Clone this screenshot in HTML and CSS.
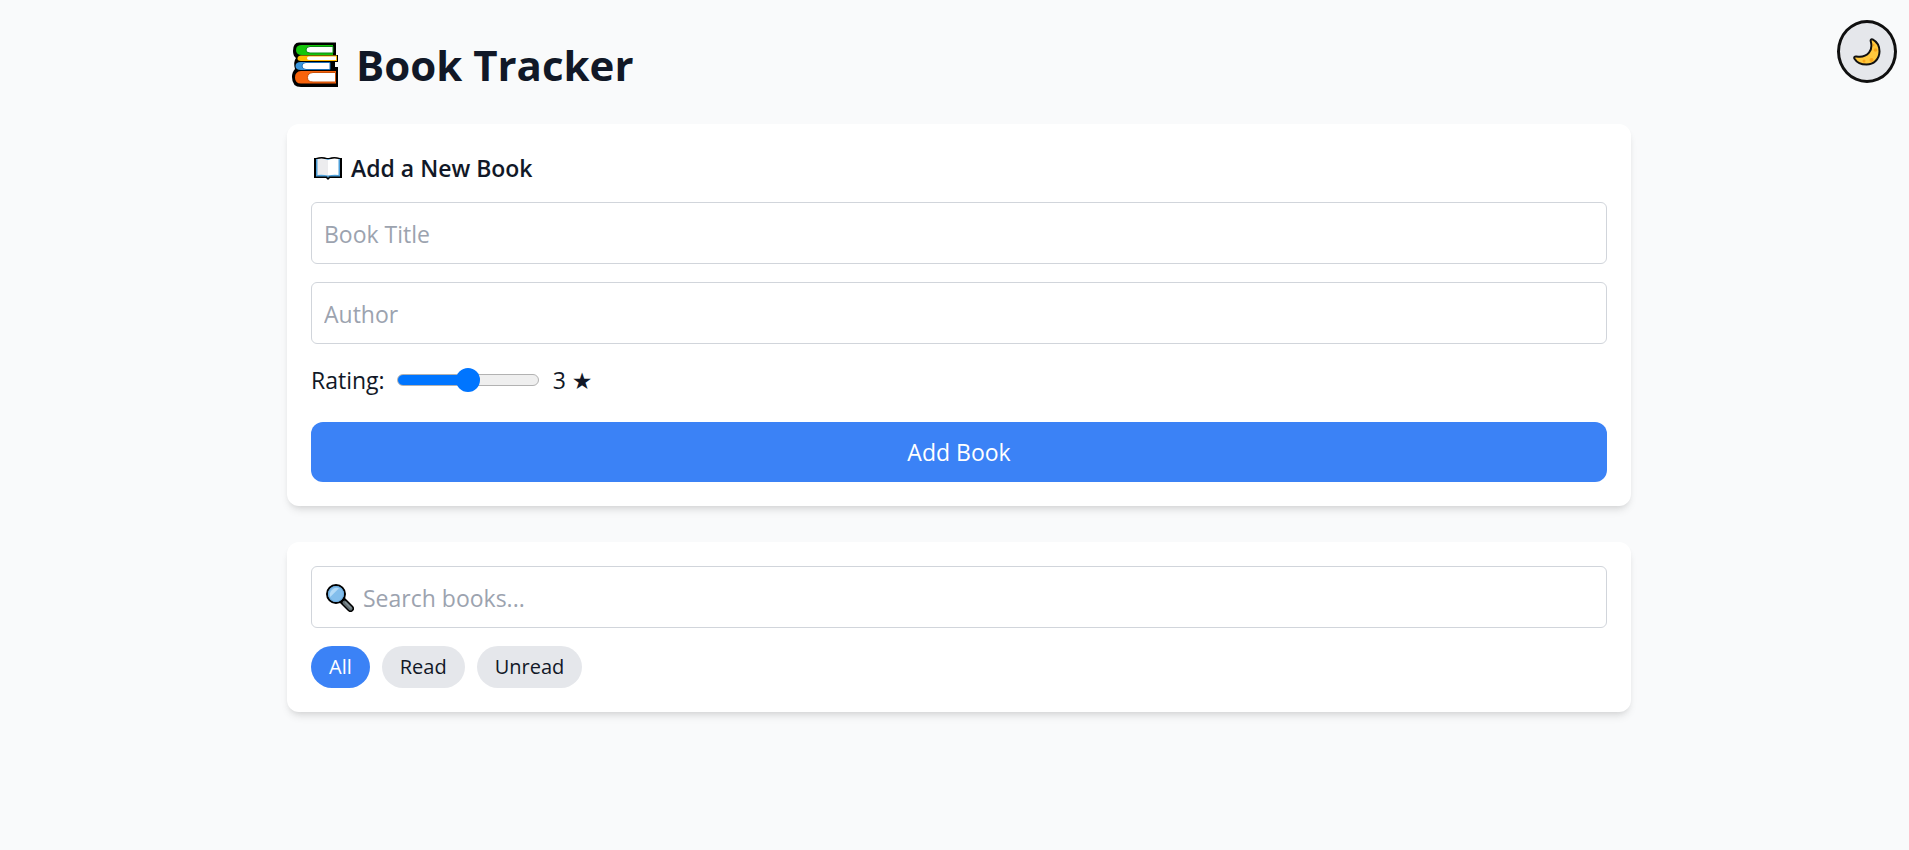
FILE: index.html
```html
<!DOCTYPE html>
<html lang="en">
<head>
<meta charset="utf-8">
<meta name="viewport" content="width=device-width, initial-scale=1">
<title>Book Tracker</title>
<link rel="stylesheet" href="styles.css">
</head>
<body>
<button class="theme-toggle" type="button" aria-label="Switch to dark mode">
  <svg class="icon-moon" viewBox="0 0 28 28" aria-hidden="true">
    <path d="M19.6 1.4C23.600 3.600 26.600 8 26.500 13.600C26.400 21.500 20.500 26.600 13.500 26.600C8 26.600 3.500 24 1.500 20.700C.7 19.200 1.700 18.200 3.400 18.500C8.500 19.400 13 18.200 16 14.700C18.600 11.600 18.900 7.600 17.800 3.500C17.300 1.700 18.200.8 19.600 1.400Z" fill="#ffc83d" stroke="#111" stroke-width="2"/>
    <circle cx="22.500" cy="12" r="1.800" fill="#f8a51b"/><circle cx="18.500" cy="22" r="2" fill="#f8a51b"/><circle cx="11" cy="23" r="1.500" fill="#f8a51b"/><circle cx="20.500" cy="7" r="1" fill="#f8a51b"/>
  </svg>
</button>
<main class="page">
  <h1 class="title">
    <svg class="icon-books" viewBox="0 0 46 46" aria-hidden="true">
      <path d="M7 .5H44V13H46V20H43V25H46V45H9Q0 45 0 35Q0 30 3 27Q1 20 4 16Q1 14 1 9Q1 .5 7 .5Z" fill="#000"/>
      <path d="M10 3H41V13H10Q4 13 4 8Q4 3 10 3Z" fill="#16c60c"/>
      <path d="M18 4.500H41V11H18Q14 11 14 8Q14 4.500 18 4.500Z" fill="#fff" stroke="#0b8b13" stroke-width="1"/>
      <path d="M9 13.500H45V19H9Q5 19 5.500 16Q6 13.500 9 13.500Z" fill="#ffb900"/>
      <path d="M17 14.500H44V18H17Q15 18 15 16.200T17 14.500Z" fill="#fff"/>
      <path d="M9 20H38V28H9Q3.500 28 3.500 24T9 20Z" fill="#3a96dd"/>
      <path d="M14 20.500H38V27.500H14Q10 27.500 10 24T14 20.500Z" fill="#fff" stroke="#1b70b8" stroke-width="1"/>
      <path d="M9 29H44V41.500H9Q3 41.500 3 35.500T9 29Z" fill="#f7630c"/>
      <path d="M21 30.500H43.500V40H21Q15.500 40 15.500 35.500T21 30.500Z" fill="#fff" stroke="#c9500a" stroke-width="1"/>
    </svg>
    Book Tracker
  </h1>

  <form class="card">
    <h2 class="card-title">
      <svg class="icon-open" viewBox="0 0 28 24" aria-hidden="true">
        <path d="M0 2H2Q8 0 13 2H15Q20 0 26 2H28V22H16L14 24L12 22H0Z" fill="#000"/>
        <path d="M2 3H26V20.500H15L14 22L13 20.500H2Z" fill="#4d9fd8"/>
        <path d="M3.500 3Q9 1.500 14 4V19.500Q9 18.500 3.500 19Z" fill="#ececee"/>
        <path d="M14 4Q19 1.500 24.500 3V19Q19 18.500 14 19.500Z" fill="#fff"/>
      </svg>
      Add a New Book
    </h2>
    <input class="field" type="text" placeholder="Book Title" aria-label="Book Title">
    <input class="field" type="text" placeholder="Author" aria-label="Author">
    <div class="rating">
      <label for="rating">Rating:</label>
      <input class="slider" id="rating" type="range" min="1" max="5" value="3">
      <output class="score" for="rating">3 <span class="star">★</span></output>
    </div>
    <button class="submit" type="button">Add Book</button>
  </form>

  <section class="card">
    <label class="field search">
      <svg class="icon-search" viewBox="0 0 28 28" aria-hidden="true">
        <path d="M16.500 16.500L24.500 24.500" stroke="#000" stroke-width="7" stroke-linecap="round"/>
        <path d="M18.500 18.500L24.500 24.500" stroke="#606c70" stroke-width="4" stroke-linecap="round"/>
        <path d="M19.500 18.500L25 24" stroke="#849195" stroke-width="1.500" stroke-linecap="round"/>
        <circle cx="10" cy="10" r="9" fill="#83beec" stroke="#000" stroke-width="2"/>
        <path d="M4.200 13A7 7 0 0 1 13 4.200Z" fill="#b4dbf7"/>
        <circle cx="10" cy="10" r="7.500" fill="none" stroke="#6bace0" stroke-width="1"/>
      </svg>
      <input class="search-input" type="text" placeholder="Search books..." aria-label="Search books">
    </label>
    <div class="filters">
      <button class="pill pill-active" type="button">All</button>
      <button class="pill" type="button">Read</button>
      <button class="pill" type="button">Unread</button>
    </div>
  </section>
</main>
</body>
</html>
```
FILE: styles.css
```css
* {
  box-sizing: border-box;
}

body {
  margin: 0;
  padding: 38px 24px 36px 33px;
  background: #f9fafb;
  color: #111827;
  font-family: "Open Sans", "Noto Sans", sans-serif;
  font-size: 23px;
  line-height: 36px;
}

button,
input {
  font: inherit;
  color: inherit;
}

svg {
  flex: none;
}

.page {
  max-width: 1344px;
  margin: 0 auto;
}

.title {
  display: flex;
  align-items: center;
  gap: 18px;
  margin: 0 0 32px;
  padding-left: 5px;
  font-size: 42px;
  font-weight: 700;
  line-height: 54px;
}

.icon-books {
  width: 46px;
  height: 46px;
}

.card {
  margin-bottom: 36px;
  padding: 24px;
  border-radius: 12px;
  background: #fff;
  box-shadow: 0 6px 9px -2px rgba(0, 0, 0, 0.1), 0 3px 6px -3px rgba(0, 0, 0, 0.1);
}

.card-title {
  display: flex;
  align-items: center;
  gap: 9px;
  margin: 0 0 16px;
  padding: 2px 0 0 3px;
  font-size: 23px;
  font-weight: 600;
}

.icon-open {
  width: 28px;
  height: 24px;
}

.field {
  display: block;
  width: 100%;
  height: 62px;
  margin: 0 0 18px;
  padding: 14px 12px 12px;
  border: 1px solid #d1d5db;
  border-radius: 6px;
  background: #fff;
}

::placeholder {
  color: #9ca3af;
  opacity: 1;
}

.rating {
  display: flex;
  align-items: center;
  gap: 12px;
  margin-bottom: 24px;
}

.slider {
  appearance: none;
  width: 142px;
  height: 12px;
  margin: 0 2px 0 0;
  border: 1px solid #b2b2b2;
  border-radius: 6px;
  background: linear-gradient(to right, #0075ff 50%, #efefef 50%) border-box;
}

.slider::-webkit-slider-thumb {
  appearance: none;
  width: 24px;
  height: 24px;
  border-radius: 50%;
  background: #0075ff;
}

.star {
  font-family: "DejaVu Sans", sans-serif;
  line-height: 1;
}

.submit {
  display: block;
  width: 100%;
  padding: 12px;
  border: 0;
  border-radius: 12px;
  background: #3b82f6;
  color: #fff;
}

.search {
  display: flex;
  align-items: center;
  gap: 9px;
  padding-left: 14px;
}

.icon-search {
  width: 28px;
  height: 28px;
}

.search-input {
  flex: 1;
  min-width: 0;
  padding: 0;
  border: 0;
  outline: 0;
  background: transparent;
}

.filters {
  display: flex;
  gap: 12px;
}

.pill {
  padding: 6px 18px;
  border: 0;
  border-radius: 21px;
  background: #e5e7eb;
  font-size: 20px;
  line-height: 30px;
}

.pill-active {
  background: #3b82f6;
  color: #fff;
}

.theme-toggle {
  position: fixed;
  top: 20px;
  right: 12px;
  display: flex;
  align-items: center;
  justify-content: center;
  width: 60px;
  height: 63px;
  padding: 0;
  border: 3px solid #101010;
  border-radius: 50%;
  background: #e5e7eb;
}

.icon-moon {
  width: 28px;
  height: 28px;
}
```
